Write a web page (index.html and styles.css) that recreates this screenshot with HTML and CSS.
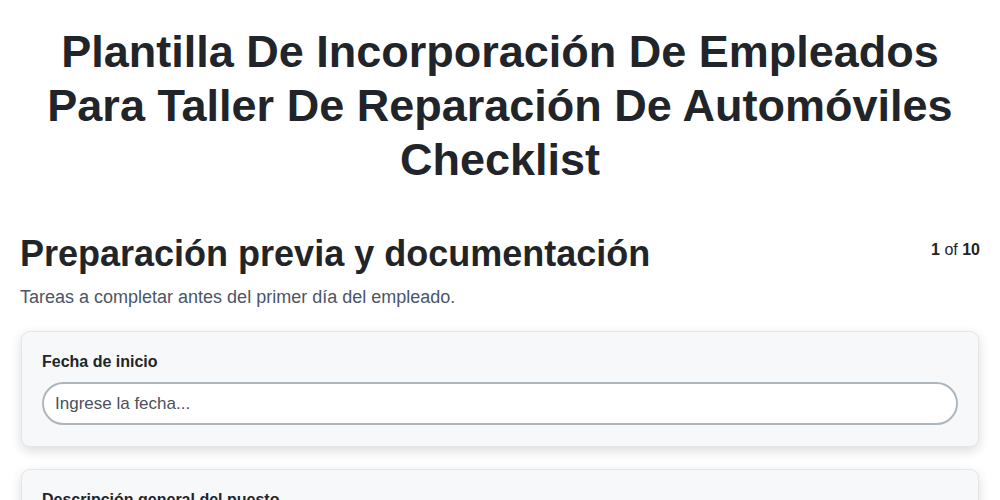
FILE: index.html
```html
<!DOCTYPE html>
<html lang="es">
<head>
<meta charset="utf-8">
<title>Checklist</title>
<link rel="stylesheet" href="styles.css">
</head>
<body>
<main class="page">
  <h1 class="title">Plantilla De Incorporación De Empleados Para Taller De Reparación De Automóviles Checklist</h1>
  <section class="section">
    <div class="section-head">
      <h2 class="section-title">Preparación previa y documentación</h2>
      <div class="counter"><b>1</b> of <b>10</b></div>
    </div>
    <p class="section-desc">Tareas a completar antes del primer día del empleado.</p>
    <div class="card">
      <label class="field-label" for="f1">Fecha de inicio</label>
      <input class="field-input" id="f1" type="text" placeholder="Ingrese la fecha...">
    </div>
    <div class="card">
      <label class="field-label" for="f2">Descripción general del puesto</label>
      <input class="field-input" id="f2" type="text" placeholder="Ingrese la descripción...">
    </div>
  </section>
</main>
</body>
</html>
```
FILE: styles.css
```css
* { box-sizing: border-box; }
html, body { margin: 0; padding: 0; background: #ffffff; }
body {
  font-family: "Liberation Sans", Arial, sans-serif;
  color: #212529;
}
.page {
  padding: 25px 20px 20px;
}
.title {
  margin: 0 0 45px;
  font-size: 45px;
  line-height: 54px;
  font-weight: 700;
  text-align: center;
  color: #212529;
}
.section-head {
  display: flex;
  justify-content: space-between;
  align-items: flex-start;
}
.section-title {
  margin: 0;
  font-size: 36px;
  line-height: 44px;
  font-weight: 700;
  color: #212529;
}
.counter {
  font-size: 16px;
  color: #212529;
  padding-top: 9px;
}
.section-desc {
  margin: 10px 0 23px;
  font-size: 18px;
  line-height: 22px;
  color: #4a5568;
}
.card {
  background: #f7f8fa;
  border: 1px solid #e4e6ea;
  border-radius: 9px;
  box-shadow: 0 4px 12px rgba(0, 0, 0, 0.14);
  padding: 20px 20px 21px;
  margin: 0 1px 22px;
  display: flex;
  flex-direction: column;
}
.field-label {
  font-size: 16px;
  line-height: 20px;
  font-weight: 700;
  color: #212529;
  margin-bottom: 10px;
}
.field-input {
  height: 43px;
  border: 2px solid #adb5bd;
  border-radius: 22px;
  background: #ffffff;
  padding: 0 11px;
  font-family: "Liberation Sans", Arial, sans-serif;
  font-size: 17px;
  color: #212529;
}
.field-input::placeholder { color: #4a5060; opacity: 1; }
```
